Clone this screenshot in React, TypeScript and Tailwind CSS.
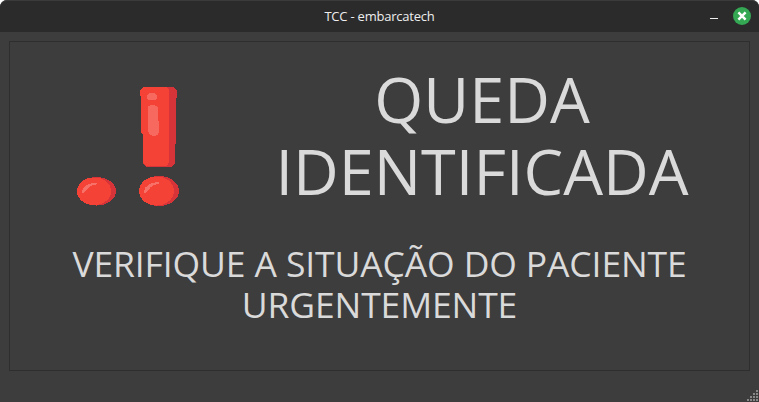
import React from "react";

function TitleBar() {
  return (
    <header className="relative h-8 shrink-0 bg-[#2b2b2b] border-t border-[#3b3b3b] rounded-t-[7px] flex items-center justify-center">
      <span className="-mt-px text-[13px] leading-[18px] tracking-[-0.22px] text-[#eeeeee] whitespace-nowrap">TCC - embarcatech</span>
      <div className="absolute right-2 top-1.5 flex items-center gap-[15px]">
        <span className="mt-[5px] h-px w-2 bg-[#eeeeee]" />
        <svg width="18" height="18" viewBox="0 0 18 18" aria-label="Fechar">
          <circle cx="9" cy="9" r="9" fill="#35a854" />
          <path d="M5.400 5.400l7.200 7.200M12.600 5.400l-7.200 7.200" stroke="#fff" strokeWidth="2.5" />
        </svg>
      </div>
    </header>
  );
}

function Dot({ x, y }: { x: number; y: number }) {
  return (
    <g transform={`translate(${x} ${y})`}>
      <ellipse cx="20" cy="15" rx="20" ry="15" fill="#d63438" />
      <ellipse cx="17.5" cy="15" rx="17.5" ry="14.5" fill="#f44336" />
      <path d="M5 15.500C5 10 12 6 20 6C21.500 6.500 21 7.500 19 8C12 9 10 13 8 16C6.500 17.500 5 17 5 15.500Z" fill="#f77168" />
    </g>
  );
}

function AlertIcon() {
  return (
    <svg width="104" height="122" viewBox="76 86 104 122" shapeRendering="crispEdges">
      <path d="M144 87H173L175 88L177 91V97L176 99V143L175 144V163L171 167H146L143 164V134L141 133V97L140 95V91L142 88Z" fill="#d63438" />
      <path d="M144 87H166L169 90V162L168 165L166 166H147L143 163V134L141 133V97L140 95V91L142 88Z" fill="#f44336" />
      <rect x="147" y="93" width="10" height="7" rx="3.5" fill="#f7695f" />
      <path d="M148 108Q148 105 152 105Q158 105 158 109L159 132Q158 136 154 136Q148 135 148 130Z" fill="#f7695f" />
      <g transform="translate(77 177) scale(.975 .95)">
        <Dot x={0} y={0} />
      </g>
      <Dot x={139} y={176} />
    </svg>
  );
}

function SizeGrip() {
  const rows = [1, 2, 3, 4];
  return (
    <div className="absolute right-px bottom-px flex flex-col items-end gap-px">
      {rows.map((count) => (
        <div key={count} className="flex gap-px">
          {Array.from({ length: count }, (_, i) => (
            <span key={i} className="size-0.5 bg-[#888888]" />
          ))}
        </div>
      ))}
    </div>
  );
}

export default function App() {
  return (
    <div className="h-[402px] w-[759px] bg-white font-['Open_Sans',sans-serif]">
      <div className="relative flex h-full flex-col rounded-t-[7px] bg-[#3d3d3d] text-[#dadada]">
        <TitleBar />
        <main className="mx-[9px] mt-[9px] h-[330px] border border-[#2e2e2e]">
          <section className="flex h-[201px]">
            <div className="pl-[66px] pt-11">
              <AlertIcon />
            </div>
            <h1 className="ml-[89px] w-[426px] pt-[21px] text-center text-[63px] leading-[72px] font-normal whitespace-nowrap">
              <span className="block">QUEDA</span>
              <span className="block">IDENTIFICADA</span>
            </h1>
          </section>
          <p className="text-center text-[35.5px] leading-[41px] tracking-[-0.13px] font-normal whitespace-nowrap">
            <span className="block">VERIFIQUE A SITUAÇÃO DO PACIENTE</span>
            <span className="block">URGENTEMENTE</span>
          </p>
        </main>
        <SizeGrip />
      </div>
    </div>
  );
}
